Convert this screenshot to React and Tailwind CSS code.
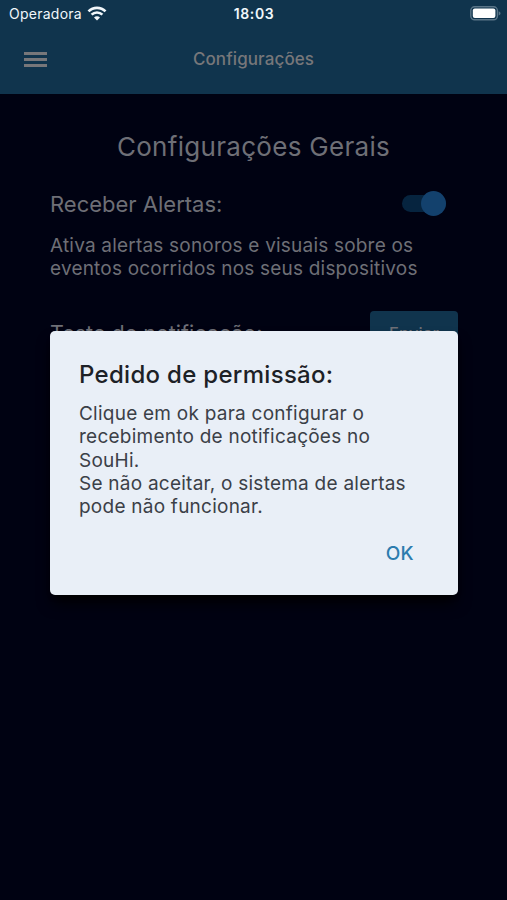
function WifiIcon() {
  return (
    <svg width="20" height="15" viewBox="0 0 20 15" fill="none" stroke="currentColor">
      <path d="M1.5 5.4a12 12 0 0 1 17 0" strokeWidth="2.7" />
      <path d="M4.6 8.7a7.6 7.6 0 0 1 10.8 0" strokeWidth="2.6" />
      <path d="M10 14.4 7 11.4a4.2 4.2 0 0 1 6 0Z" fill="currentColor" stroke="none" />
    </svg>
  );
}

function BatteryIcon() {
  return (
    <svg width="31" height="15" viewBox="0 0 31 15">
      <rect x="0.8" y="0.8" width="26.6" height="13" rx="3.8" fill="none" stroke="#5a7588" strokeWidth="1.4" />
      <rect x="2.8" y="2.6" width="22.6" height="9.4" rx="2" fill="#fff" />
      <path d="M28.7 5.2c1.2.5 1.8 1.2 1.8 2.1s-.6 1.7-1.8 2.1Z" fill="#5a7588" />
    </svg>
  );
}

function StatusBar() {
  return (
    <div className="grid h-[27px] grid-cols-3 items-center pl-[9px] pr-[6px] text-[#f1f7fb]">
      <div className="flex items-center gap-[5px]">
        <span className="text-[14px] tracking-[0.25px]">Operadora</span>
        <WifiIcon />
      </div>
      <span className="pr-[2px] text-center text-[14px] font-semibold tracking-[0.6px]">18:03</span>
      <div className="flex justify-end">
        <BatteryIcon />
      </div>
    </div>
  );
}

function Header() {
  return (
    <header className="h-[94px] bg-[#10344d]">
      <StatusBar />
      <div className="grid h-[65px] grid-cols-[1fr_auto_1fr] items-center px-6 text-[#77777a]">
        <button className="flex w-[23px] flex-col gap-[3px]" aria-label="Menu">
          <span className="h-[3px] w-full bg-current" />
          <span className="h-[3px] w-full bg-current" />
          <span className="h-[3px] w-full bg-current" />
        </button>
        <h1 className="text-[17px] font-medium tracking-[0.1px]">Configurações</h1>
      </div>
    </header>
  );
}

function Toggle() {
  return (
    <div className="flex h-[25px] w-[44px] items-center">
      <div className="flex h-[17px] w-[44px] items-center justify-end rounded-full bg-[#06243f]">
        <span className="h-[25px] w-[25px] shrink-0 rounded-full bg-[#13416d]" />
      </div>
    </div>
  );
}

function Settings() {
  return (
    <main className="pl-[50px] pr-[50px] text-[#6e6f76]">
      <h2 className="pt-[34px] text-center text-[26px] leading-[38px] tracking-[0.3px]">Configurações Gerais</h2>

      <div className="mt-[21px] flex h-8 items-center justify-between pr-[11px]">
        <span className="pt-[2px] text-[22px]">Receber Alertas:</span>
        <Toggle />
      </div>
      <p className="mt-[14.5px] whitespace-nowrap text-[19px] leading-[23.5px] tracking-[0.2px]">
        Ativa alertas sonoros e visuais sobre os
        <br />
        eventos ocorridos nos seus dispositivos
      </p>

      <div className="-mr-px mt-[30.5px] flex h-[42px] items-center justify-between">
        <span className="pt-[3px] text-[21.5px]">Teste de notificação:</span>
        <button className="h-[42px] w-[88px] rounded-[4px] bg-[#10344d] pt-[3px] text-[16.5px] font-medium tracking-[0.2px]">
          Enviar
        </button>
      </div>
    </main>
  );
}

function PermissionDialog() {
  return (
    <div className="absolute inset-0 flex items-center justify-center pt-[26px]">
      <div
        role="dialog"
        className="flex h-[264px] w-[408px] flex-col rounded-[5px] bg-[#e9eff7] pl-[29.5px] pr-[29px] shadow-lg shadow-black"
      >
        <h3 className="pt-[28px] text-[24px] font-medium leading-[32px] tracking-[0.3px] text-[#1d2126]">
          Pedido de permissão:
        </h3>
        <p className="mt-[11px] whitespace-nowrap text-[19px] leading-[23.3px] tracking-[0.24px] text-[#3b4047]">
          Clique em ok para configurar o
          <br />
          recebimento de notificações no
          <br />
          SouHi.
          <br />
          Se não aceitar, o sistema de alertas
          <br />
          pode não funcionar.
        </p>
        <div className="mt-[21px] flex justify-end pr-[15px]">
          <button className="text-[19px] font-medium leading-[30px] text-[#2c7cae]">OK</button>
        </div>
      </div>
    </div>
  );
}

export default function App() {
  return (
    <div className="relative h-[900px] w-full overflow-hidden bg-[#000212] font-['Inter',sans-serif]">
      <Header />
      <Settings />
      <PermissionDialog />
    </div>
  );
}
